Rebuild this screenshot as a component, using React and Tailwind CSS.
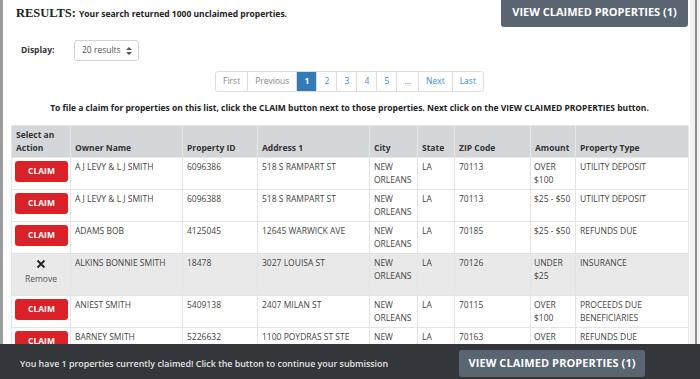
import React from 'react';

const rows = [
   { owner: 'A J LEVY & L J SMITH', id: '6096386', addr: '518 S RAMPART ST', city: 'NEW ORLEANS', state: 'LA', zip: '70113', amount: 'OVER $100', type: 'UTILITY DEPOSIT' },
   { owner: 'A J LEVY & L J SMITH', id: '6096388', addr: '518 S RAMPART ST', city: 'NEW ORLEANS', state: 'LA', zip: '70113', amount: '$25\u00a0-\u00a0$50', type: 'UTILITY DEPOSIT' },
   { owner: 'ADAMS BOB', id: '4125045', addr: '12645 WARWICK AVE', city: 'NEW ORLEANS', state: 'LA', zip: '70185', amount: '$25\u00a0-\u00a0$50', type: 'REFUNDS DUE' },
   { owner: 'ALKINS BONNIE SMITH', id: '18478', addr: '3027 LOUISA ST', city: 'NEW ORLEANS', state: 'LA', zip: '70126', amount: 'UNDER $25', type: 'INSURANCE', claimed: true },
   { owner: 'ANIEST SMITH', id: '5409138', addr: '2407 MILAN ST', city: 'NEW ORLEANS', state: 'LA', zip: '70115', amount: 'OVER $100', type: 'PROCEEDS DUE BENEFICIARIES' },
   { owner: 'BARNEY SMITH', id: '5226632', addr: '1100 POYDRAS ST STE 1000', city: 'NEW ORLEANS', state: 'LA', zip: '70163', amount: 'OVER $100', type: 'REFUNDS DUE' },
];

const pages = [
   { label: 'First', muted: true },
   { label: 'Previous', muted: true },
   { label: '1', active: true },
   { label: '2' },
   { label: '3' },
   { label: '4' },
   { label: '5' },
   { label: '...' },
   { label: 'Next' },
   { label: 'Last' },
];

function ClaimedButton() {
   return (
      <button className="h-[27px] w-[186px] rounded-[3px] bg-[#5a6571] text-[11px] font-bold text-white tracking-[0.1px]">
         VIEW CLAIMED PROPERTIES (1)
      </button>
   );
}

export default function App() {
   const td = 'border border-[#e2e4e6] px-[4px] py-[3px] align-top';
   const th = 'border border-[#e4e6e8] px-[4px] py-[3px] align-bottom';

   return (
      <div className="relative flex h-[379px] w-[700px] overflow-hidden bg-white font-['Open_Sans',sans-serif] text-[8.5px] leading-[12.5px] text-[#444]">
         <div className="w-[3px] shrink-0 bg-[#9b9b9b]" />

         <div className="flex w-[687px] shrink-0 flex-col pl-[8px] pr-[2px]">
            <div className="flex h-[27px] items-start justify-between">
               <div className="flex items-baseline pl-[5px] pt-[5px]">
                  <span className="font-['Liberation_Serif',serif] text-[12.5px] font-bold leading-[16px] text-[#222]">RESULTS:</span>
                  <span className="ml-[3px] font-bold text-[#222]">Your search returned 1000 unclaimed properties.</span>
               </div>
               <button className="-mt-[3px] h-[30px] w-[187px] rounded-[3px] bg-[#5a6571] text-[11px] font-bold text-white">
                  VIEW CLAIMED PROPERTIES (1)
               </button>
            </div>

            <div className="mt-[13px] flex h-[21px] items-center">
               <span className="ml-[10px] w-[53px] font-bold text-[#333]">Display:</span>
               <div className="flex h-[21px] w-[65px] items-center rounded-[3px] border border-[#d4d4d4] pl-[7px] text-[#555]">
                  <span>20 results</span>
                  <svg width="6" height="8" viewBox="0 0 6 8" className="ml-[5px]">
                     <path d="M3 0 L6 3 H0 Z M3 8 L0 5 H6 Z" fill="#555" />
                  </svg>
               </div>
            </div>

            <div className="mt-[10px] flex justify-center">
               <div className="flex h-[21px] rounded-[3px] border border-[#dedede]">
                  {pages.map((p, i) => (
                     <div
                        key={p.label}
                        className={
                           'flex items-center justify-center px-[7px] ' +
                           (i > 0 ? 'border-l border-[#dedede] ' : '') +
                           (p.active ? 'bg-[#337ab7] font-bold text-white ' : p.muted ? 'text-[#8a8a8a] ' : 'text-[#3a8fd6] ') +
                           (p.label.length === 1 ? 'w-[20px] ' : '')
                        }
                     >
                        {p.label}
                     </div>
                  ))}
               </div>
            </div>

            <p className="mt-[9px] text-center font-bold leading-[14px] text-[#222]">
               To file a claim for properties on this list, click the CLAIM button next to those properties. Next click on the VIEW CLAIMED PROPERTIES button.
            </p>

            <table className="mt-[10px] w-[677px] table-fixed border-collapse">
               <colgroup>
                  <col className="w-[59px]" />
                  <col className="w-[112px]" />
                  <col className="w-[75px]" />
                  <col className="w-[112px]" />
                  <col className="w-[48px]" />
                  <col className="w-[37px]" />
                  <col className="w-[76px]" />
                  <col className="w-[45px]" />
                  <col className="w-[113px]" />
               </colgroup>
               <thead>
                  <tr className="h-[32px] bg-[#d4d7da] text-left font-bold text-[#333]">
                     <th className={th}>Select an Action</th>
                     <th className={th}>Owner Name</th>
                     <th className={th}>Property ID</th>
                     <th className={th}>Address 1</th>
                     <th className={th}>City</th>
                     <th className={th}>State</th>
                     <th className={th}>ZIP Code</th>
                     <th className={th}>Amount</th>
                     <th className={th}>Property Type</th>
                  </tr>
               </thead>
               <tbody>
                  {rows.map((r, i) => (
                     <tr key={i} className={r.claimed ? 'h-[42px] bg-[#e9e9e9]' : 'h-[31px]'}>
                        <td className="border border-[#e2e4e6] px-[3px] py-[3px] align-top">
                           {r.claimed ? (
                              <div className="flex flex-col items-center text-[#555]">
                                 <svg width="10" height="10" viewBox="0 0 10 10" className="mt-[2px]">
                                    <path d="M1.5 1.5 L8.5 8.5 M8.5 1.5 L1.5 8.5" stroke="#222" strokeWidth="1.8" />
                                 </svg>
                                 <span className="mt-[4px]">Remove</span>
                              </div>
                           ) : (
                              <button className="h-[21px] w-[53px] rounded-[3px] bg-[#db2128] font-bold text-white">CLAIM</button>
                           )}
                        </td>
                        <td className={td}>{r.owner}</td>
                        <td className={td}>{r.id}</td>
                        <td className={td}>{r.addr}</td>
                        <td className={td}>{r.city}</td>
                        <td className={td}>{r.state}</td>
                        <td className={td}>{r.zip}</td>
                        <td className="border border-[#e2e4e6] py-[3px] pl-[3px] pr-0 align-top">{r.amount}</td>
                        <td className={td}>{r.type}</td>
                     </tr>
                  ))}
               </tbody>
            </table>
         </div>

         <div className="flex w-[10px] shrink-0 bg-[#f1f1f1]">
            <div className="ml-[5px] w-[2px] bg-[#8c8c8c]" />
         </div>

         <div className="absolute bottom-0 left-0 right-0 flex h-[35px] items-start justify-between bg-[#33373c] pl-[20px] pr-[55px] pt-[6px]">
            <span className="mt-[8px] text-[8.9px] font-semibold text-[#e4e4e4]">
               You have 1 properties currently claimed! Click the button to continue your submission
            </span>
            <ClaimedButton />
         </div>
      </div>
   );
}
